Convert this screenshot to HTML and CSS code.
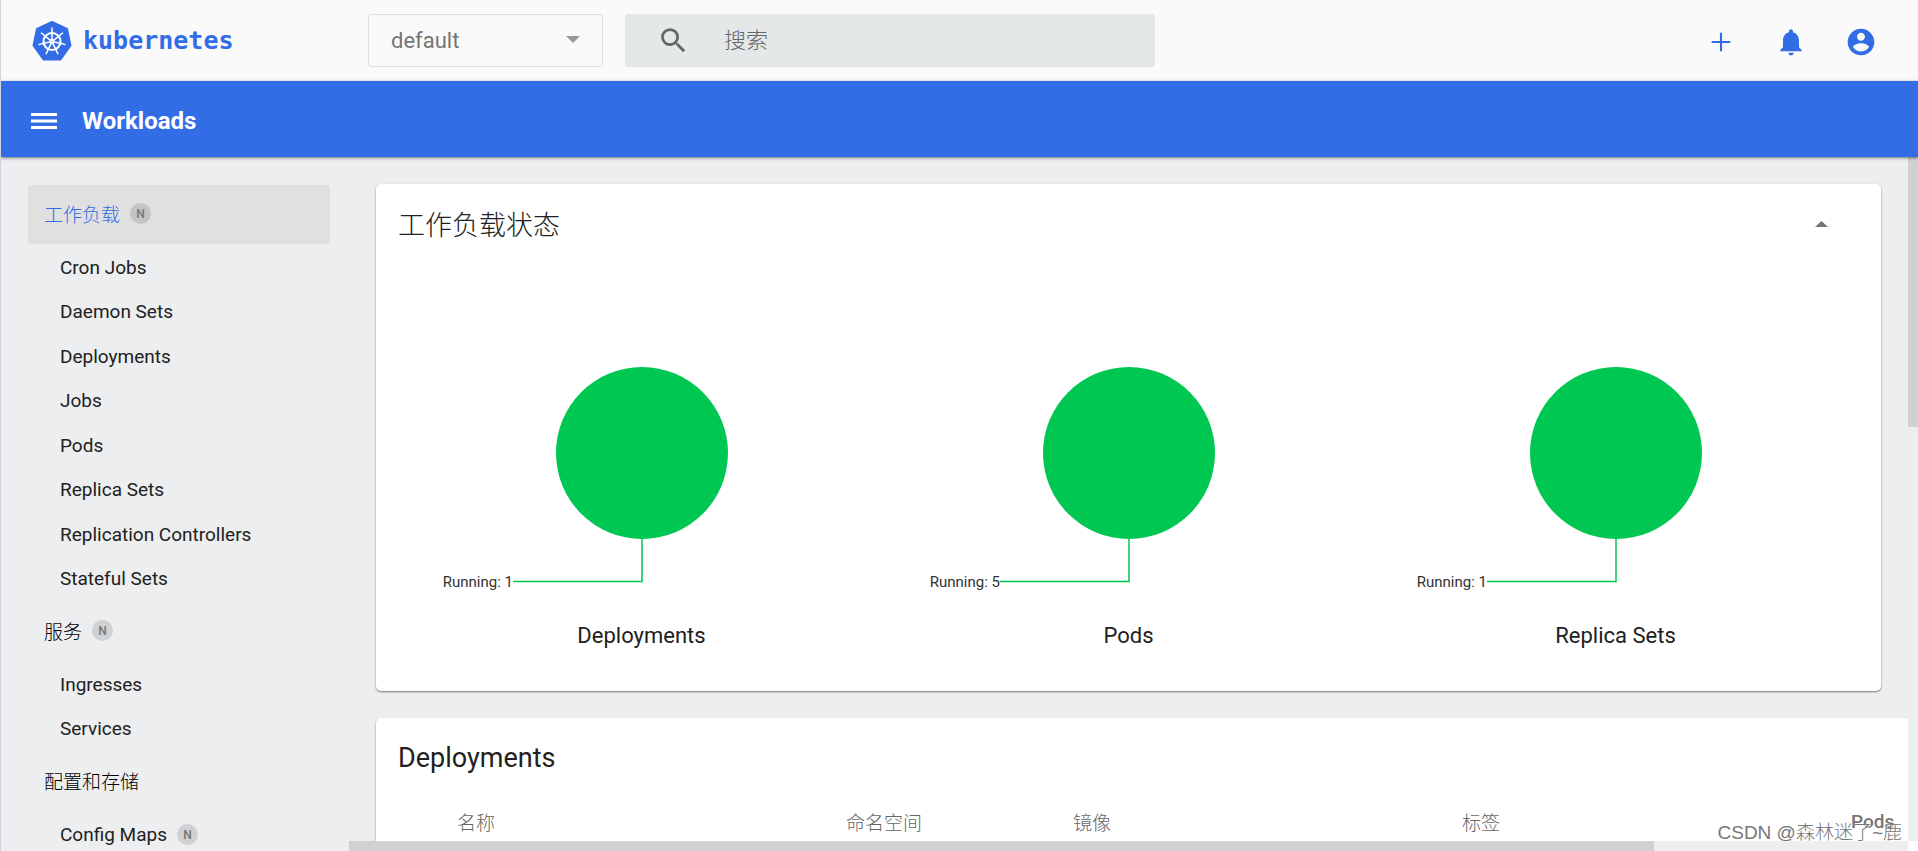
FILE: index.html
```html
<!DOCTYPE html>
<html lang="zh-CN">
<head>
<meta charset="utf-8">
<title>Kubernetes Dashboard</title>
<link rel="stylesheet" href="styles.css">
</head>
<body>
<div class="app">
  <header class="topbar">
    <a class="brand" href="#" aria-label="kubernetes">
      <svg class="brand-mark" viewBox="0 0 40 42" aria-hidden="true">
        <path class="hepta" d="M20 2 L35 9 L38.500 25.500 L28.500 39.500 H11.500 L1.500 25.500 L5 9 Z"/>
        <g class="wheel">
          <circle cx="20" cy="21.500" r="8.500"/>
          <path id="spoke" d="M20 20 V7.500"/>
          <use href="#spoke" transform="rotate(51.430 20 21.500)"/>
          <use href="#spoke" transform="rotate(102.860 20 21.500)"/>
          <use href="#spoke" transform="rotate(154.290 20 21.500)"/>
          <use href="#spoke" transform="rotate(205.710 20 21.500)"/>
          <use href="#spoke" transform="rotate(257.140 20 21.500)"/>
          <use href="#spoke" transform="rotate(308.570 20 21.500)"/>
          <circle cx="20" cy="21.500" r="1.500"/>
        </g>
      </svg>
      <span class="brand-name">kubernetes</span>
    </a>
    <div class="namespace">
      <select class="namespace-select" aria-label="Namespace"><option>default</option></select>
      <svg class="namespace-arrow" viewBox="0 0 14 7" aria-hidden="true"><path d="M0 0h14L7 7z"/></svg>
    </div>
    <div class="search">
      <svg class="search-icon" viewBox="0 0 24 24" aria-hidden="true"><path d="M15.500 14h-.79l-.28-.27A6.471 6.471 0 0 0 16 9.500 6.500 6.500 0 1 0 9.500 16c1.610 0 3.090-.59 4.230-1.570l.27.28v.79l5 4.990L20.490 19l-4.990-5zm-6 0C7.010 14 5 11.990 5 9.500S7.010 5 9.500 5 14 7.010 14 9.500 11.990 14 9.500 14z"/></svg>
      <input class="search-input" type="text" placeholder="搜索" aria-label="搜索">
    </div>
    <div class="actions">
      <button class="icon-button" type="button" aria-label="Create"><svg viewBox="0 0 24 24"><path d="M19 12.800h-6.200V19h-1.600v-6.200H5v-1.600h6.200V5h1.600v6.200H19z"/></svg></button>
      <button class="icon-button" type="button" aria-label="Notifications"><svg viewBox="0 0 24 24"><path d="M12 22c1.100 0 2-.9 2-2h-4c0 1.100.89 2 2 2zm6-6v-5c0-3.070-1.640-5.640-4.500-6.320V4c0-.83-.67-1.500-1.500-1.500s-1.500.67-1.500 1.500v.68C7.630 5.360 6 7.920 6 11v5l-2 2v1h16v-1l-2-2z"/></svg></button>
      <button class="icon-button" type="button" aria-label="Account"><svg viewBox="0 0 24 24"><path d="M12 2C6.480 2 2 6.480 2 12s4.480 10 10 10 10-4.480 10-10S17.520 2 12 2zm0 3c1.660 0 3 1.340 3 3s-1.340 3-3 3-3-1.340-3-3 1.340-3 3-3zm0 14.200c-2.500 0-4.710-1.280-6-3.220.03-1.990 4-3.080 6-3.080 1.990 0 5.970 1.090 6 3.080-1.290 1.940-3.500 3.220-6 3.220z"/></svg></button>
    </div>
  </header>

  <div class="titlebar">
    <button class="menu-button" type="button" aria-label="Menu"><svg viewBox="0 0 26 16"><path d="M0 0h26v3H0zM0 6.500h26v3H0zM0 13h26v3H0z"/></svg></button>
    <h1 class="page-title">Workloads</h1>
  </div>

  <div class="body">
    <nav class="sidebar">
      <a class="group active" href="#">工作负载<span class="badge">N</span></a>
      <ul class="items">
        <li><a href="#">Cron Jobs</a></li>
        <li><a href="#">Daemon Sets</a></li>
        <li><a href="#">Deployments</a></li>
        <li><a href="#">Jobs</a></li>
        <li><a href="#">Pods</a></li>
        <li><a href="#">Replica Sets</a></li>
        <li><a href="#">Replication Controllers</a></li>
        <li><a href="#">Stateful Sets</a></li>
      </ul>
      <a class="group" href="#">服务<span class="badge">N</span></a>
      <ul class="items">
        <li><a href="#">Ingresses</a></li>
        <li><a href="#">Services</a></li>
      </ul>
      <a class="group" href="#">配置和存储</a>
      <ul class="items">
        <li><a href="#">Config Maps<span class="badge">N</span></a></li>
      </ul>
    </nav>

    <main class="content">
      <section class="card">
        <div class="card-head">
          <h2 class="card-title">工作负载状态</h2>
          <button class="collapse" type="button" aria-label="Collapse"><svg viewBox="0 0 13 6"><path d="M0 6h13L6.500 0z"/></svg></button>
        </div>
        <div class="charts">
          <figure class="chart">
            <svg class="pie" viewBox="0 0 400 230" role="img" aria-label="Running: 1"><circle cx="200" cy="86" r="86"/><path d="M200 171V214.500H71"/><text x="71" y="220">Running: 1</text></svg>
            <figcaption>Deployments</figcaption>
          </figure>
          <figure class="chart">
            <svg class="pie" viewBox="0 0 400 230" role="img" aria-label="Running: 5"><circle cx="200" cy="86" r="86"/><path d="M200 171V214.500H71"/><text x="71" y="220">Running: 5</text></svg>
            <figcaption>Pods</figcaption>
          </figure>
          <figure class="chart">
            <svg class="pie" viewBox="0 0 400 230" role="img" aria-label="Running: 1"><circle cx="200" cy="86" r="86"/><path d="M200 171V214.500H71"/><text x="71" y="220">Running: 1</text></svg>
            <figcaption>Replica Sets</figcaption>
          </figure>
        </div>
      </section>

      <section class="card card-wide">
        <div class="card-head">
          <h2 class="card-title latin">Deployments</h2>
        </div>
        <table class="list">
          <colgroup><col class="col-name"><col class="col-namespace"><col class="col-name"><col class="col-name"><col class="col-pods"></colgroup>
          <thead><tr><th>名称</th><th>命名空间</th><th>镜像</th><th>标签</th><th class="latin">Pods</th></tr></thead>
        </table>
      </section>
    </main>
    <div class="track-y"><div class="thumb-y"></div></div>
    <div class="track-x"><div class="thumb-x"></div></div>
    <div class="corner"></div>
  </div>
  <div class="watermark">CSDN @森林迷了~鹿</div>
</div>
</body>
</html>
```
FILE: styles.css
```css
* { box-sizing: border-box; }

body {
  margin: 0;
  font-family: Roboto, "Noto Sans CJK SC", sans-serif;
  font-size: 19px;
  color: #212121;
}

a { color: inherit; text-decoration: none; }
h1, h2, ul, figure { margin: 0; padding: 0; }
button { border: 0; padding: 0; background: none; }
svg { display: block; }

.app {
  display: flex;
  flex-direction: column;
  position: relative;
  height: 100vh;
  overflow: hidden;
  border-left: 1px solid #d0d2dc;
  background: #edeef0;
}

/* Top bar */
.topbar {
  display: flex;
  align-items: center;
  flex: none;
  height: 81px;
  padding-right: 41px;
  background: #fafafa;
}

.brand {
  display: flex;
  align-items: center;
  gap: 11px;
  flex: none;
  width: 367px;
  padding-left: 31px;
}

.brand-mark { width: 40px; height: 42px; }
.hepta { fill: #326de6; stroke: #326de6; stroke-width: 2; stroke-linejoin: round; }
.wheel { fill: none; stroke: #fff; stroke-width: 2; }
.wheel path, .wheel use { stroke-width: 1.5; }

.brand-name {
  font-family: "DejaVu Sans Mono", monospace;
  font-size: 25px;
  font-weight: 700;
  color: #326de6;
}

.namespace { position: relative; flex: none; width: 235px; height: 53px; }

.namespace-select {
  width: 100%;
  height: 100%;
  padding: 0 22px;
  appearance: none;
  border: 1px solid #dcdcdc;
  border-radius: 3px;
  background: transparent;
  font: 22px Roboto, sans-serif;
  color: #757575;
}

.namespace-arrow {
  position: absolute;
  top: 22px;
  right: 23px;
  width: 14px;
  height: 7px;
  fill: #999;
  pointer-events: none;
}

.search {
  display: flex;
  align-items: center;
  gap: 34px;
  flex: 0 1 530px;
  height: 53px;
  margin-left: 22px;
  padding-left: 32px;
  border-radius: 3px;
  background: #e4e8e8;
}

.search-icon { flex: none; width: 33px; height: 33px; fill: #666; }

.search-input {
  flex: 1;
  min-width: 0;
  padding: 0;
  border: 0;
  outline: 0;
  background: none;
  font: 300 22px Roboto, "Noto Sans CJK SC", sans-serif;
  color: #212121;
}

.search-input::placeholder { color: #666; opacity: 1; }

.actions { display: flex; gap: 38px; margin-left: auto; padding-top: 2px; }
.icon-button svg { width: 32px; height: 32px; fill: #326de6; }

/* Title bar */
.titlebar {
  display: flex;
  align-items: center;
  gap: 25px;
  flex: none;
  position: relative;
  height: 76px;
  padding: 3px 0 0 30px;
  background: #326de6;
  box-shadow: 0 1px 3px rgba(0, 0, 0, .5);
}

.menu-button svg { width: 26px; height: 16px; fill: #fff; }
.page-title { font-size: 24px; font-weight: 700; color: #fff; }

/* Body */
.body {
  display: grid;
  grid-template-columns: 348px minmax(0, 1fr) 10px;
  grid-template-rows: minmax(0, 1fr) 10px;
  flex: 1;
  min-height: 0;
}

.sidebar {
  grid-row: 1 / 3;
  overflow: hidden;
  padding: 28px 19px 0 27px;
}

.group {
  display: flex;
  align-items: center;
  height: 59px;
  margin-bottom: 1px;
  padding: 0 0 2px 16px;
  border-radius: 3px;
  font-weight: 300;
  color: #000;
}

.group.active { background: #e0e0e0; color: #326de6; }

.items { margin-bottom: 1px; list-style: none; }
.items a { display: flex; align-items: center; height: 44px; padding-left: 32px; }
.items li:nth-child(even) a { height: 45px; }

.badge {
  width: 21px;
  height: 21px;
  margin-left: 10px;
  border-radius: 50%;
  background: rgba(0, 0, 0, .12);
  font-size: 12px;
  font-weight: 500;
  line-height: 23px;
  text-align: center;
  color: #757575;
}

.content { overflow: hidden; padding: 27px; }

.card {
  margin-bottom: 27px;
  padding: 0 22px;
  border-radius: 5px;
  background: #fff;
  box-shadow: 0 1px 2px rgba(0, 0, 0, .5);
}

.card-wide { width: 1900px; }

.card-head {
  display: flex;
  align-items: center;
  justify-content: space-between;
  height: 80px;
}

.card-title { padding-top: 3px; font-size: 27px; font-weight: 300; line-height: 40px; }
.card-title.latin { padding-top: 0; font-weight: 400; }
.collapse { margin-right: 31px; }
.collapse svg { width: 13px; height: 6px; fill: #757575; }

.charts {
  display: grid;
  grid-template-columns: repeat(3, 1fr);
  padding: 103px 0 42px;
}

.pie { width: 400px; max-width: 100%; height: 230px; margin: 0 auto 26px; overflow: visible; }
.pie circle { fill: #00c752; }
.pie path { fill: none; stroke: #00c752; stroke-width: 1.5; }
.pie text { font-size: 15px; text-anchor: end; fill: #333; }
.chart figcaption { font-size: 22px; line-height: 26px; text-align: center; }

.list {
  width: 100%;
  margin-left: 59px;
  table-layout: fixed;
  border-collapse: collapse;
}

.col-name { width: 389px; }
.col-namespace { width: 227px; }

.list th {
  height: 47px;
  padding: 0;
  font-weight: 300;
  text-align: left;
  color: #666;
}

.list th.latin { font-weight: 500; color: #757575; }

/* Scroll rails */
.track-y { background: #edeef0; }
.thumb-y { height: 270px; background: #d0d1d3; }
.track-x { grid-column: 2; background: #eee; }
.thumb-x { width: 1305px; max-width: 100%; height: 100%; background: #d0d1d3; }
.corner { background: #fff; }

.watermark {
  position: absolute;
  right: 16px;
  bottom: 4px;
  font-family: "Liberation Sans", "Noto Sans CJK SC", sans-serif;
  font-size: 19px;
  font-weight: 300;
  line-height: 28px;
  color: #777;
  text-shadow: 1px 1px 1px #fff;
}
```
